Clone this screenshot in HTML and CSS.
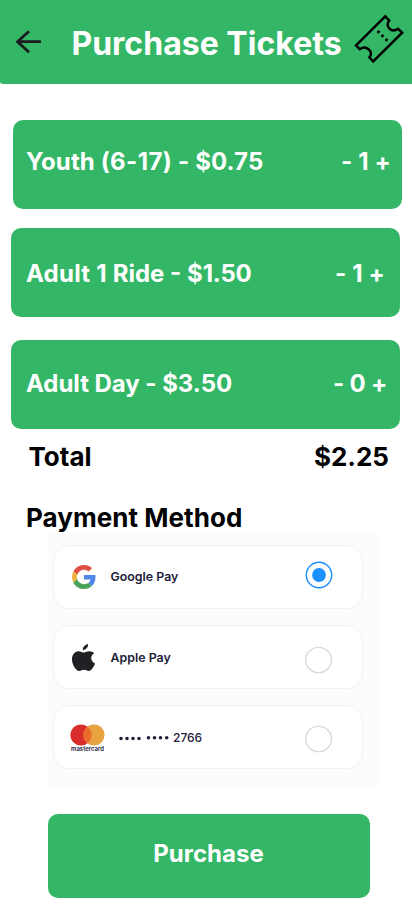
FILE: index.html
```html
<!DOCTYPE html>
<html lang="en">
<head>
<meta charset="utf-8">
<meta name="viewport" content="width=device-width, initial-scale=1">
<title>Purchase Tickets</title>
<link rel="stylesheet" href="styles.css">
</head>
<body>
<header class="header">
  <svg class="back" width="28" height="24" viewBox="0 0 28 24" aria-label="Back"><path d="M27 11.700H3M15 1.200L3.500 11.700L15 22.200" /></svg>
  <h1 class="title">Purchase Tickets</h1>
  <svg class="ticket" width="50" height="50" viewBox="0 0 50 50"><path d="M31.200 2.300L2 31.400L5.800 35.200C12.500 30.500 20 38 15.400 43.300L19.200 47.500L48.200 18.700L44 14.800C37.500 19.500 30.500 12.500 35.200 6.500Z"/><path class="perf" d="M23.600 16.900L25.400 18.700M27.600 20.900L29.400 22.700M31.600 24.900L33.400 26.700"/></svg>
</header>
<main>
  <section class="tickets">
    <div class="card youth"><span>Youth <span class="ages">(6-17)</span> - $0.75</span><span class="count">- 1 +</span></div>
    <div class="card ride"><span><span class="kind">Adult 1 </span>Ride - $<span class="price">1.50</span></span><span class="count">- 1 +</span></div>
    <div class="card day"><span>Adult Day - $3.50</span><span class="count">- 0 +</span></div>
  </section>
  <div class="total"><span>Total</span><span>$2.25</span></div>
  <h2 class="heading">Payment Method</h2>
  <section class="methods">
    <div class="method">
      <svg class="logo google" width="24" height="24" viewBox="0 0 48 48"><path fill="#dd5144" d="M24 9.500c3.540 0 6.710 1.220 9.210 3.600l6.850-6.850C35.900 2.380 30.470 0 24 0 14.620 0 6.510 5.380 2.560 13.220l7.980 6.190C12.430 13.720 17.740 9.500 24 9.500z"/><path fill="#4f86ec" d="M46.980 24.550c0-1.570-.15-3.090-.38-4.550H24v9.020h12.940c-.58 2.960-2.260 5.480-4.780 7.180l7.730 6c4.510-4.180 7.090-10.360 7.090-17.650z"/><path fill="#edb340" d="M10.530 28.590c-.48-1.450-.76-2.990-.76-4.590s.27-3.140.76-4.590l-7.980-6.190C.92 16.460 0 20.120 0 24s.92 7.540 2.560 10.780l7.970-6.190z"/><path fill="#4ba25a" d="M24 48c6.480 0 11.930-2.130 15.890-5.810l-7.730-6c-2.150 1.450-4.920 2.300-8.160 2.300-6.260 0-11.570-4.220-13.470-9.910l-7.980 6.190C6.510 42.620 14.620 48 24 48z"/></svg>
      <span class="name">Google Pay</span>
      <svg class="radio on" width="28" height="28" viewBox="0 0 28 28"><circle cx="14" cy="14" r="12.700"/><circle class="dot" cx="14" cy="14" r="6.900"/></svg>
    </div>
    <div class="method">
      <svg class="logo apple" width="23" height="27" viewBox="0 0 22 26" preserveAspectRatio="none"><path fill="#202124" d="M15.400 0c.3 2.900-2 5.900-5 5.900C10.100 3 12.600.4 15.400 0zM21.200 8.900c-4.200 2.500-3.500 8.100.8 9.800-.9 2.800-3.300 7.100-6 7.200-1.800 0-2.400-1.100-4.500-1.100S8.700 25.900 7 26C3.700 26.100 0 19.700 0 14.700 0 9.800 3.100 7.100 6.300 7c2 0 3.600 1.300 4.800 1.300 1.100 0 3.200-1.500 5.500-1.300 1.900.1 3.600.8 4.600 1.900z"/></svg>
      <span class="name lower">Apple Pay</span>
      <svg class="radio low" width="28" height="28" viewBox="0 0 28 28"><ellipse cx="13.600" cy="14" rx="12.900" ry="12.600"/></svg>
    </div>
    <div class="method">
      <div class="logo mc">
        <svg width="35" height="22" viewBox="0 0 35 22"><circle cx="11" cy="11" r="10.600" fill="#d92d2b"/><circle cx="24" cy="11" r="10.600" fill="#e9a240"/><path fill="#ea6a2c" d="M17.500 2.630a10.600 10.600 0 0 1 0 16.740a10.600 10.600 0 0 1 0-16.740z"/></svg>
        <span class="brand">mastercard</span>
      </div>
      <svg class="dots" width="52" height="8" viewBox="0 0 52 8"><path d="M3 4.500h.01M9 4.500h.01M15 4.500h.01M21 4.500h.01M30.500 3.800h.01M36.500 3.800h.01M42.500 3.800h.01M48.700 3.800h.01"/></svg>
      <span class="digits">2766</span>
      <svg class="radio mid" width="28" height="28" viewBox="0 0 28 28"><ellipse cx="13.600" cy="14" rx="12.900" ry="12.600"/></svg>
    </div>
  </section>
  <button class="buy">Purchase</button>
</main>
</body>
</html>
```
FILE: styles.css
```css
* { box-sizing: border-box; }
body { margin: 0; background: #fff; font-family: Inter, sans-serif; color: #000; }
.header { display: flex; align-items: center; height: 84px; padding-left: 14px; background: #33b766; border-bottom-left-radius: 5px 2px; }
.back { fill: none; stroke: #1d1b20; stroke-width: 2.8; }
.title { margin: 3px 0 0 29.4px; width: 284px; font-size: 32px; font-weight: 700; line-height: 40px; color: #fff; white-space: nowrap; letter-spacing: 0.02px; }
.ticket { flex: none; margin: 0 0 6px -1.4px; fill: none; stroke: #000; stroke-width: 2.5; }
.ticket .perf { stroke-width: 2.8; stroke-dasharray: 2.6; }
.tickets { display: flex; flex-direction: column; padding-top: 36px; }
.card { display: flex; justify-content: space-between; width: 389px; height: 89px; margin-left: 11px; padding: 0 15px; border-radius: 10px; background: #33b766; color: #fff; font-size: 24px; font-weight: 700; white-space: pre; }
.youth { margin-left: 13px; padding: 0 11px 0 13px; line-height: 84px; letter-spacing: 0.1px; }
.ages { letter-spacing: 0.4px; }
.ride { margin-top: 19px; line-height: 92px; }
.kind { letter-spacing: 0.23px; }
.price { letter-spacing: -0.2px; }
.count { letter-spacing: 0.15px; }
.day { margin-top: 23px; padding-right: 13px; line-height: 88px; letter-spacing: -0.04px; }
.day .count { letter-spacing: -0.2px; }
.total { display: flex; justify-content: space-between; margin-top: 12px; padding: 0 23px 0 28.5px; font-size: 26px; font-weight: 700; line-height: 32px; }
.heading { margin: 29px 0 0 26px; font-size: 26px; font-weight: 700; line-height: 32px; letter-spacing: 0.05px; }
.methods { display: flex; flex-direction: column; gap: 16px; width: 331px; height: 254px; margin: -1px 0 0 48px; padding: 12px 16px 0 5px; background: #fbfdfc; }
.method { display: flex; align-items: center; height: 64px; padding: 0 29px 0 18px; border: 1px solid #f0f1f5; border-radius: 16px; background: #fff; color: #202038; }
.name { margin-left: 14.5px; font-size: 12.4px; font-weight: 600; line-height: 16px; }
.lower { margin-top: 2px; }
.apple { margin-right: 1px; }
.radio { margin-left: auto; fill: none; stroke: #d9d9d9; stroke-width: 1.4; }
.on { margin-bottom: 4px; stroke: #1b90ff; }
.dot { fill: #1b90ff; stroke: none; }
.low { margin-top: 6px; }
.mid { margin-top: 4px; }
.mc { display: flex; flex-direction: column; align-items: center; width: 35px; margin: 1px 0 0 -2px; }
.mc svg { display: block; }
.brand { font-size: 6px; font-weight: 600; line-height: 6px; }
.dots { margin: 2px 0 0 13px; fill: none; stroke: #202038; stroke-width: 3.6; stroke-linecap: round; }
.digits { margin: 2px 0 0 3px; font-size: 12px; font-weight: 500; line-height: 16px; }
.buy { display: block; width: 322px; height: 84px; margin: 27px 0 0 48px; padding: 0 1px 5px 0; border: 0; border-radius: 10px; background: #33b766; color: #fff; font: 700 24px/30px Inter, sans-serif; }
```
